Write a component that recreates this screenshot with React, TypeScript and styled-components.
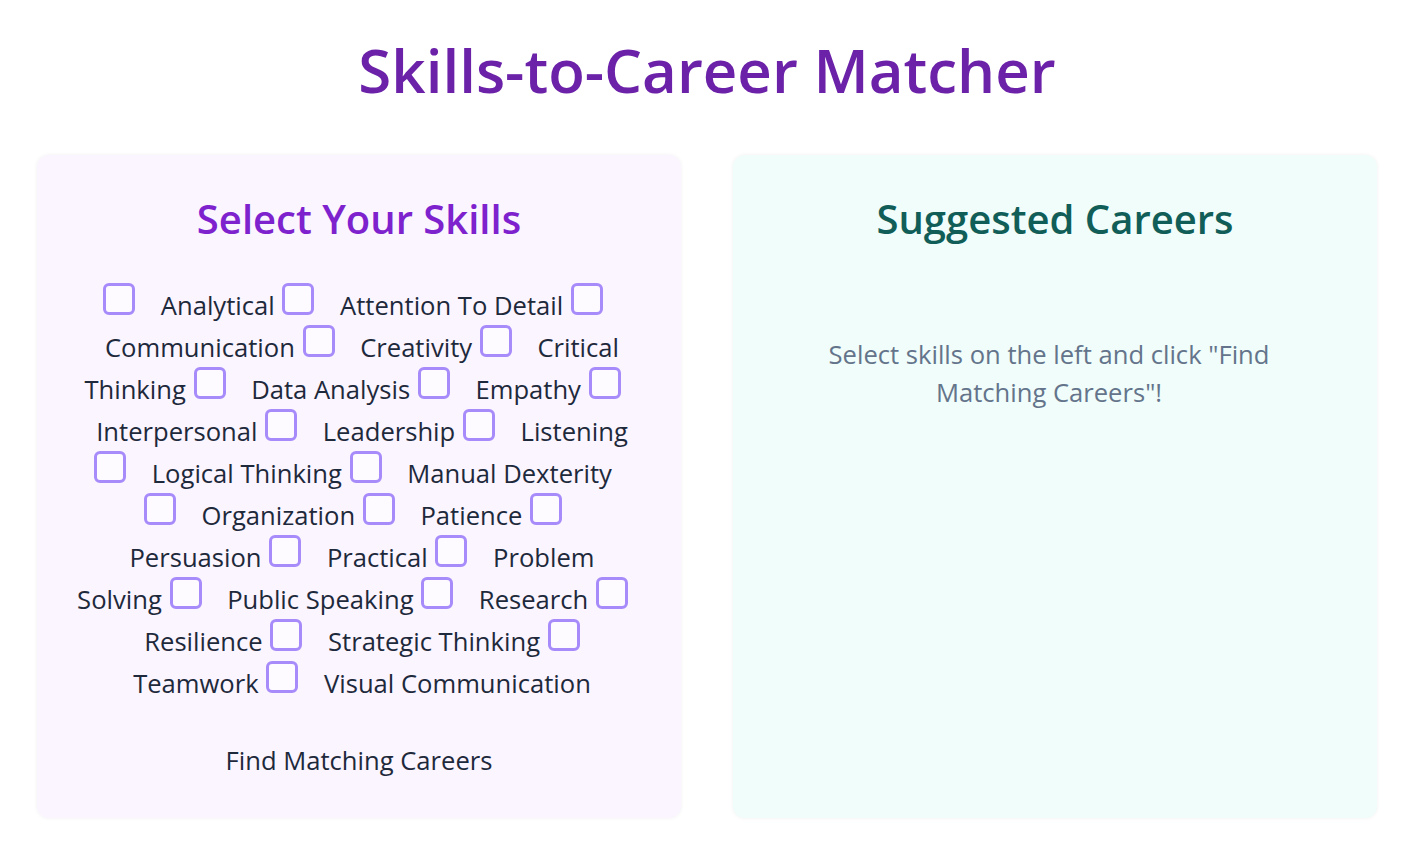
import React, { useState } from 'react';
import styled, { createGlobalStyle } from 'styled-components';

const GlobalStyle = createGlobalStyle`
  body {
    margin: 0;
    background: #ffffff;
    font-family: 'Open Sans', 'Noto Sans', sans-serif;
    color: #1e293b;
  }
`;

const Page = styled.div`
  padding: 34px 37px 40px;
`;

const Title = styled.h1`
  margin: 0 0 49px;
  text-align: center;
  font-size: 60px;
  line-height: 72px;
  font-weight: 600;
  color: #6b21a8;
`;

const Columns = styled.div`
  display: grid;
  grid-template-columns: 1fr 1fr;
  gap: 52px;
`;

const Panel = styled.section<{ $tone: 'purple' | 'teal' }>`
  background: ${(p) => (p.$tone === 'purple' ? '#faf5ff' : '#f0fdfa')};
  border-radius: 12px;
  box-shadow: 0 0 4px rgba(15, 23, 42, 0.06);
  padding: 40px 40px 28px;
  text-align: center;
`;

const PanelTitle = styled.h2<{ $tone: 'purple' | 'teal' }>`
  margin: 0 0 40px;
  font-size: 40px;
  line-height: 48px;
  font-weight: 600;
  color: ${(p) => (p.$tone === 'purple' ? '#7e22ce' : '#115e59')};
`;

const SkillList = styled.div`
  font-size: 25.6px;
  line-height: 38px;
  margin: 0 11px 29px -2px;
`;

const SkillLabel = styled.label`
  cursor: pointer;
`;

const SkillName = styled.span`
  margin-left: 19px;
`;

const Box = styled.input`
  appearance: none;
  display: inline-block;
  width: 32px;
  height: 32px;
  margin: 0 0 0 1px;
  box-sizing: border-box;
  border: 3px solid #a78bfa;
  border-radius: 6px;
  background: #fdfbff;
  vertical-align: baseline;
  cursor: pointer;

  &:checked {
    background: #a78bfa;
  }
`;

const FindButton = styled.button`
  border: none;
  background: transparent;
  font-family: inherit;
  font-size: 25.6px;
  line-height: 38.4px;
  padding: 10px 20px;
  color: #1e293b;
  cursor: pointer;
`;

const Message = styled.p`
  margin: 0;
  padding: 53px 32px 0 20px;
  font-size: 25.6px;
  line-height: 38.4px;
  color: #64748b;
`;

const skills = [
  'Analytical',
  'Attention To Detail',
  'Communication',
  'Creativity',
  'Critical Thinking',
  'Data Analysis',
  'Empathy',
  'Interpersonal',
  'Leadership',
  'Listening',
  'Logical Thinking',
  'Manual Dexterity',
  'Organization',
  'Patience',
  'Persuasion',
  'Practical',
  'Problem Solving',
  'Public Speaking',
  'Research',
  'Resilience',
  'Strategic Thinking',
  'Teamwork',
  'Visual Communication',
];

const App = () => {
  const [picked, setPicked] = useState<string[]>([]);

  const toggle = (skill: string) => {
    setPicked((prev) =>
      prev.includes(skill) ? prev.filter((s) => s !== skill) : [...prev, skill]
    );
  };

  return (
    <Page>
      <GlobalStyle />
      <Title>Skills-to-Career Matcher</Title>
      <Columns>
        <Panel $tone="purple">
          <PanelTitle $tone="purple">Select Your Skills</PanelTitle>
          <SkillList>
            {skills.map((skill) => (
              <React.Fragment key={skill}>
                <SkillLabel>
                  <Box
                    type="checkbox"
                    checked={picked.includes(skill)}
                    onChange={() => toggle(skill)}
                  />{' '}
                  <SkillName>{skill}</SkillName>
                </SkillLabel>{' '}
              </React.Fragment>
            ))}
          </SkillList>
          <FindButton>Find Matching Careers</FindButton>
        </Panel>
        <Panel $tone="teal">
          <PanelTitle $tone="teal">Suggested Careers</PanelTitle>
          <Message>Select skills on the left and click "Find Matching Careers"!</Message>
        </Panel>
      </Columns>
    </Page>
  );
};

export default App;
